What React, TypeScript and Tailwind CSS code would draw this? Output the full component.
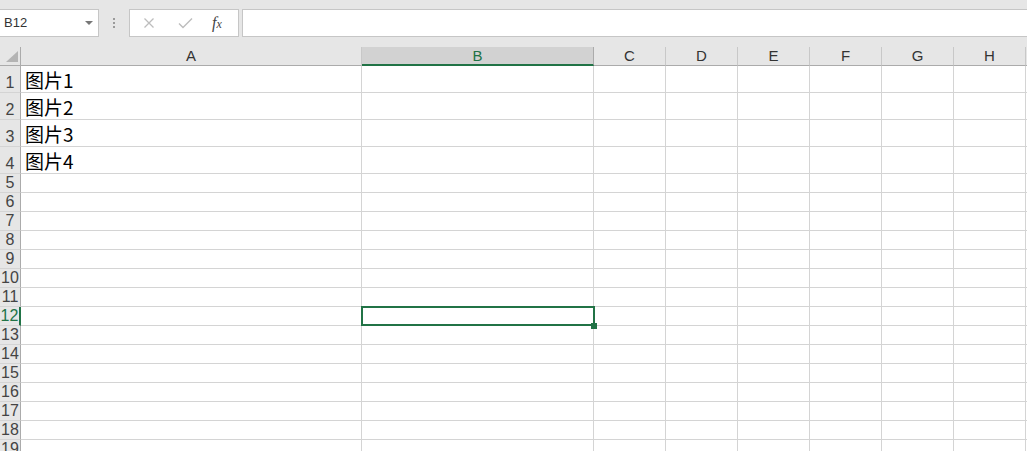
const cols = [
  { key: 'A', w: 'w-[341px]' },
  { key: 'B', w: 'w-[232px]' },
  { key: 'C', w: 'w-[72px]' },
  { key: 'D', w: 'w-[72px]' },
  { key: 'E', w: 'w-[72px]' },
  { key: 'F', w: 'w-[72px]' },
  { key: 'G', w: 'w-[72px]' },
  { key: 'H', w: 'w-[72px]' },
];

const cells: Record<string, string> = {
  A1: '图片1',
  A2: '图片2',
  A3: '图片3',
  A4: '图片4',
};

const rows = Array.from({ length: 20 }, (_, i) => i + 1);

const uiFont = { fontFamily: '"Liberation Sans", Arial, sans-serif' };
const cellFont = { fontFamily: '"Noto Sans CJK SC", "Liberation Sans", sans-serif' };

function FormulaBar() {
  return (
    <div className="flex h-[47px] items-start bg-[#e6e6e6] pt-[9px]" style={uiFont}>
      <div className="relative flex h-[28px] w-[99px] items-center border border-l-0 border-[#c6c6c6] bg-white pl-[4px] text-[13px] text-[#333]">
        B12
        <span className="absolute right-[5px] top-[11px] h-0 w-0 border-x-[4px] border-t-[4px] border-x-transparent border-t-[#777]" />
      </div>
      <div className="flex h-[28px] w-[30px] flex-col items-center justify-center gap-[2px]">
        <span className="h-[2px] w-[2px] bg-[#9a9a9a]" />
        <span className="h-[2px] w-[2px] bg-[#9a9a9a]" />
        <span className="h-[2px] w-[2px] bg-[#9a9a9a]" />
      </div>
      <div className="flex h-[28px] w-[110px] items-center border border-[#c6c6c6] bg-white">
        <svg className="ml-[13px]" width="12" height="12" viewBox="0 0 12 12">
          <path d="M1.5 1.5 L10.5 10.5 M10.5 1.5 L1.5 10.5" stroke="#bdbdbd" strokeWidth="1.3" fill="none" />
        </svg>
        <svg className="ml-[23px]" width="15" height="12" viewBox="0 0 15 12">
          <path d="M1 6.5 L5 10.5 L14 1.5" stroke="#bdbdbd" strokeWidth="1.4" fill="none" />
        </svg>
        <span
          className="ml-[19px] text-[16px] italic leading-none text-[#444]"
          style={{ fontFamily: '"Liberation Serif", "Times New Roman", serif' }}
        >
          f<span className="text-[12px]">x</span>
        </span>
      </div>
      <div className="ml-[3px] h-[28px] flex-1 border border-r-0 border-[#c6c6c6] bg-white" />
    </div>
  );
}

function HeaderRow() {
  return (
    <div className="flex h-[19px] bg-[#e6e6e6]" style={uiFont}>
      <div className="relative h-[19px] w-[21px] border-r border-b border-[#ababab]">
        <svg className="absolute bottom-[3px] right-[2px]" width="12" height="11" viewBox="0 0 12 11">
          <path d="M12 0 L12 11 L0 11 Z" fill="#b4b4b4" />
        </svg>
      </div>
      {cols.map((c) =>
        c.key === 'B' ? (
          <div
            key={c.key}
            className={`${c.w} flex h-[19px] items-center justify-center border-r border-b-2 border-r-[#ababab] border-b-[#217346] bg-[#d2d2d2] pt-[2px] text-[15px] text-[#217346]`}
          >
            {c.key}
          </div>
        ) : (
          <div
            key={c.key}
            className={`${c.w} flex h-[19px] items-center justify-center border-r border-b border-r-[#c8c8c8] border-b-[#ababab] pt-[1px] text-[15px] text-[#333]`}
          >
            {c.key}
          </div>
        )
      )}
      <div className="flex-1 border-b border-[#ababab]" />
    </div>
  );
}

function Row({ n }: { n: number }) {
  const h = n <= 4 ? 'h-[27px]' : 'h-[19px]';
  const active = n === 12;
  return (
    <div className={`flex ${h}`}>
      <div
        className={`flex w-[21px] items-end justify-center bg-[#e6e6e6] text-[16px] leading-[18px] ${
          active ? 'border-r-2 border-r-[#217346] text-[#217346]' : 'border-r border-r-[#ababab] text-[#444]'
        } border-b border-b-[#d4d4d4]`}
        style={uiFont}
      >
        {n}
      </div>
      {cols.map((c) => {
        const id = `${c.key}${n}`;
        const selected = id === 'B12';
        return (
          <div
            key={c.key}
            className={`${c.w} relative flex items-end border-r border-b border-[#d4d4d4] pl-[4px] text-[19px] leading-[25px] text-black`}
            style={cellFont}
          >
            {cells[id]}
            {selected && (
              <>
                <div className="absolute -left-[1px] -top-[1px] bottom-[-1px] right-[-2px] z-10 border-2 border-[#217346]" />
                <div className="absolute -bottom-[4px] -right-[4px] z-10 h-[6px] w-[6px] bg-[#217346]" />
              </>
            )}
          </div>
        );
      })}
      <div className="flex-1 border-b border-[#d4d4d4]" />
    </div>
  );
}

export default function App() {
  return (
    <div className="h-[451px] w-[1027px] overflow-hidden bg-white">
      <FormulaBar />
      <HeaderRow />
      {rows.map((n) => (
        <Row key={n} n={n} />
      ))}
    </div>
  );
}
